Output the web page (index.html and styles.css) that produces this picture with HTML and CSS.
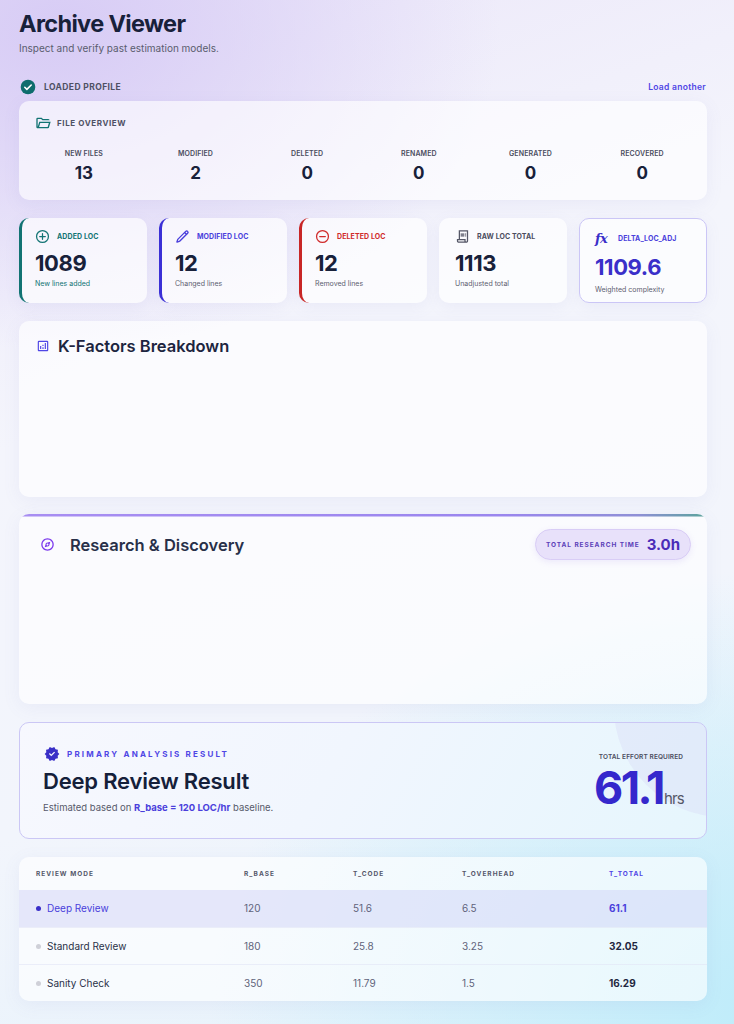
FILE: index.html
```html
<!DOCTYPE html>
<html lang="en">
<head>
<meta charset="utf-8">
<title>Archive Viewer</title>
<link rel="stylesheet" href="styles.css">
</head>
<body>
<div class="page">
  <header class="head">
    <h1 class="title">Archive Viewer</h1>
    <p class="subtitle">Inspect and verify past estimation models.</p>
  </header>

  <div class="profile-bar">
    <div class="profile-left">
      <svg class="ic16" viewBox="0 0 24 24"><circle cx="12" cy="12" r="11" fill="#0e6d6d"/><path d="M7.2 12.4l3.1 3.1L16.8 9" fill="none" stroke="#fff" stroke-width="2.4" stroke-linecap="round" stroke-linejoin="round"/></svg>
      <span class="profile-label">LOADED PROFILE</span>
    </div>
    <a class="load-link">Load another</a>
  </div>

  <section class="card overview">
    <div class="card-head">
      <svg class="ic16 teal" viewBox="0 -960 960 960"><path fill="currentColor" d="M160-160q-33 0-56.5-23.5T80-240v-480q0-33 23.5-56.5T160-800h240l80 80h320q33 0 56.5 23.5T880-640H447l-80-80H160v480l96-320h684L837-217q-8 26-29.5 41.5T760-160H160Zm84-80h516l72-240H316l-72 240Zm0 0 72-240-72 240Zm-84-400v-80 80Z"/></svg>
      <span class="card-head-label">FILE OVERVIEW</span>
    </div>
    <div class="stats">
      <div class="stat"><span class="stat-label">NEW FILES</span><span class="stat-value">13</span></div>
      <div class="stat"><span class="stat-label">MODIFIED</span><span class="stat-value">2</span></div>
      <div class="stat"><span class="stat-label">DELETED</span><span class="stat-value">0</span></div>
      <div class="stat"><span class="stat-label">RENAMED</span><span class="stat-value">0</span></div>
      <div class="stat"><span class="stat-label">GENERATED</span><span class="stat-value">0</span></div>
      <div class="stat"><span class="stat-label">RECOVERED</span><span class="stat-value">0</span></div>
    </div>
  </section>

  <section class="metrics">
    <div class="metric m-added">
      <div class="metric-head">
        <svg class="ic15" viewBox="0 0 24 24"><circle cx="12" cy="12" r="9.5" fill="none" stroke="currentColor" stroke-width="2"/><path d="M12 7.5v9M7.5 12h9" stroke="currentColor" stroke-width="2" stroke-linecap="round"/></svg>
        <span class="metric-label">ADDED LOC</span>
      </div>
      <div class="metric-value">1089</div>
      <div class="metric-sub">New lines added</div>
    </div>
    <div class="metric m-mod">
      <div class="metric-head">
        <svg class="ic15" viewBox="0 0 24 24"><path d="M20.2 6.8a1 1 0 0 0-3-3L4.8 16.2a2 2 0 0 0-.5.8l-1.2 3.9 3.9-1.2a2 2 0 0 0 .8-.5z" fill="none" stroke="currentColor" stroke-width="2.2" stroke-linejoin="round"/><path d="M15 5.2l3.8 3.8" stroke="currentColor" stroke-width="2.2"/></svg>
        <span class="metric-label">MODIFIED LOC</span>
      </div>
      <div class="metric-value">12</div>
      <div class="metric-sub">Changed lines</div>
    </div>
    <div class="metric m-del">
      <div class="metric-head">
        <svg class="ic15" viewBox="0 0 24 24"><circle cx="12" cy="12" r="9.5" fill="none" stroke="currentColor" stroke-width="2"/><path d="M7.5 12h9" stroke="currentColor" stroke-width="2" stroke-linecap="round"/></svg>
        <span class="metric-label">DELETED LOC</span>
      </div>
      <div class="metric-value">12</div>
      <div class="metric-sub">Removed lines</div>
    </div>
    <div class="metric m-raw">
      <div class="metric-head">
        <svg class="ic15" viewBox="0 -960 960 960"><path fill="currentColor" d="M240-80q-50 0-85-35t-35-85v-120h120v-560h600v680q0 50-35 85t-85 35H240Zm480-80q17 0 28.5-11.5T760-200v-600H320v480h360v120q0 17 11.5 28.5T720-160ZM360-600v-80h240v80H360Zm0 120v-80h240v80H360Zm320-120q-17 0-28.5-11.5T640-640q0-17 11.5-28.5T680-680q17 0 28.5 11.5T720-640q0 17-11.5 28.5T680-600Zm0 120q-17 0-28.5-11.5T640-520q0-17 11.5-28.5T680-560q17 0 28.5 11.5T720-520q0 17-11.5 28.5T680-480ZM240-160h360v-80H200v40q0 17 11.5 28.5T240-160Zm-40 0v-80 80Z"/></svg>
        <span class="metric-label">RAW LOC TOTAL</span>
      </div>
      <div class="metric-value">1113</div>
      <div class="metric-sub">Unadjusted total</div>
    </div>
    <div class="metric m-delta">
      <div class="metric-head">
        <span class="fx">fx</span>
        <span class="metric-label">DELTA_LOC_ADJ</span>
      </div>
      <div class="metric-value">1109.6</div>
      <div class="metric-sub">Weighted complexity</div>
    </div>
  </section>

  <section class="card kfactors">
    <div class="section-head">
      <svg class="ic13 indigo" viewBox="0 -960 960 960"><path fill="currentColor" d="M280-280h80v-200h-80v200Zm320 0h80v-400h-80v400Zm-160 0h80v-120h-80v120Zm0-200h80v-80h-80v80ZM200-120q-33 0-56.5-23.5T120-200v-560q0-33 23.5-56.5T200-840h560q33 0 56.5 23.5T840-760v560q0 33-23.5 56.5T760-120H200Zm0-80h560v-560H200v560Zm0-560v560-560Z"/></svg>
      <h2 class="section-title">K-Factors Breakdown</h2>
    </div>
  </section>

  <section class="card research">
    <div class="research-head">
      <div class="research-title-wrap">
        <svg class="ic15 purple" viewBox="0 -960 960 960"><path fill="currentColor" d="m300-300 280-80 80-280-280 80-80 280Zm180-120q-25 0-42.5-17.5T420-480q0-25 17.5-42.5T480-540q25 0 42.5 17.5T540-480q0 25-17.5 42.5T480-420Zm0 340q-83 0-156-31.5T197-197q-54-54-85.5-127T80-480q0-83 31.5-156T197-763q54-54 127-85.5T480-880q83 0 156 31.5T763-763q54 54 85.5 127T880-480q0 83-31.5 156T763-197q-54 54-127 85.5T480-80Zm0-80q133 0 226.5-93.5T800-480q0-133-93.5-226.5T480-800q-133 0-226.5 93.5T160-480q0 133 93.5 226.5T480-160Zm0-320Z"/></svg>
        <h2 class="section-title research-title">Research &amp; Discovery</h2>
      </div>
      <div class="pill">
        <span class="pill-label">TOTAL RESEARCH TIME</span>
        <span class="pill-value">3.0h</span>
      </div>
    </div>
  </section>

  <section class="result">
    <div class="result-left">
      <div class="result-tag">
        <svg class="ic16 indigo2" viewBox="0 -960 960 960"><path fill="currentColor" d="m344-60-76-128-144-32 14-148-98-112 98-112-14-148 144-32 76-128 136 58 136-58 76 128 144 32-14 148 98 112-98 112 14 148-144 32-76 128-136-58-136 58Zm94-278 226-226-56-58-170 170-86-84-56 56 142 142Z"/></svg>
        <span class="result-tag-label">PRIMARY ANALYSIS RESULT</span>
      </div>
      <h2 class="result-title">Deep Review Result</h2>
      <p class="result-desc">Estimated based on <strong>R_base = 120 LOC/hr</strong> baseline.</p>
    </div>
    <div class="result-right">
      <span class="effort-label">TOTAL EFFORT REQUIRED</span>
      <div class="effort"><span class="effort-num">61.1</span><span class="effort-unit">hrs</span></div>
    </div>
  </section>

  <section class="card table-card">
    <table class="modes">
      <colgroup>
        <col class="c1"><col class="c2"><col class="c3"><col class="c4"><col class="c5">
      </colgroup>
      <thead>
        <tr><th>REVIEW MODE</th><th>R_BASE</th><th>T_CODE</th><th>T_OVERHEAD</th><th class="th-total">T_TOTAL</th></tr>
      </thead>
      <tbody>
        <tr class="active"><td><span class="dot"></span>Deep Review</td><td>120</td><td>51.6</td><td>6.5</td><td class="total">61.1</td></tr>
        <tr><td><span class="dot"></span>Standard Review</td><td>180</td><td>25.8</td><td>3.25</td><td class="total">32.05</td></tr>
        <tr><td><span class="dot"></span>Sanity Check</td><td>350</td><td>11.79</td><td>1.5</td><td class="total">16.29</td></tr>
      </tbody>
    </table>
  </section>
</div>
</body>
</html>
```

FILE: styles.css
```css
* { box-sizing: border-box; }
html, body { margin: 0; padding: 0; }
body {
  font-family: Inter, "Noto Sans", "Liberation Sans", sans-serif;
  color: #1b2339;
  min-height: 1024px;
  background:
    radial-gradient(ellipse 440px 320px at 60px 30px, rgba(214,202,245,0.95), rgba(214,202,245,0) 100%),
    radial-gradient(ellipse 560px 440px at 770px 1010px, rgba(190,236,250,1), rgba(190,236,250,0) 100%),
    linear-gradient(160deg, #ebe6f9 0%, #f4f5fc 35%, #f2f5fc 65%, #e4f2fb 100%);
}
.page {
  width: 734px;
  padding: 9px 27px 24px 19px;
  display: flex;
  flex-direction: column;
}
.head { margin: 0; }
.title {
  margin: 0;
  font-size: 23.5px;
  line-height: 29px;
  font-weight: 700;
  color: #18213a;
  letter-spacing: -0.65px;
}
.subtitle {
  margin: 3px 0 0;
  font-size: 10px;
  line-height: 14px;
  color: #5a5d6e;
}
.ic16 { width: 16px; height: 16px; display: block; flex: none; }
.ic15 { width: 15px; height: 15px; display: block; flex: none; }
.ic13 { width: 14px; height: 14px; display: block; flex: none; }
.teal { color: #127373; }
.indigo { color: #4f46e5; }
.indigo2 { color: #3a2fc7; }
.purple { color: #7c3aed; }

.profile-bar {
  margin-top: 24px;
  display: flex;
  align-items: center;
  justify-content: space-between;
  height: 16px;
}
.profile-left { display: flex; align-items: center; gap: 8px; padding-left: 1px; }
.profile-label {
  font-size: 8.5px;
  font-weight: 700;
  letter-spacing: 0.4px;
  color: #4e5064;
}
.load-link {
  font-size: 8.5px;
  font-weight: 600;
  color: #4f46e5;
  letter-spacing: 0.3px;
  margin-right: 1px;
}

.card {
  background: rgba(255,255,255,0.62);
  border-radius: 10px;
  box-shadow: 0 4px 18px rgba(120,120,190,0.08);
}
.overview {
  margin-top: 6px;
  height: 99px;
  padding: 14px 9px 0 16px;
}
.card-head { display: flex; align-items: center; gap: 6px; height: 16px; }
.card-head-label {
  font-size: 8px;
  font-weight: 700;
  letter-spacing: 0.6px;
  color: #4e5064;
}
.stats {
  margin: 18px 0 0 -7px;
  display: grid;
  grid-template-columns: repeat(6, 1fr);
}
.stat { display: flex; flex-direction: column; align-items: center; }
.stat-label {
  font-size: 7px;
  font-weight: 600;
  color: #4b4d5e;
  line-height: 10px;
  letter-spacing: 0.1px;
}
.stat-value {
  margin-top: 4px;
  font-size: 17px;
  font-weight: 700;
  line-height: 21px;
  color: #18213a;
}

.metrics {
  margin-top: 18px;
  display: grid;
  grid-template-columns: repeat(5, 1fr);
  gap: 12px;
}
.metric {
  height: 85px;
  border-radius: 10px;
  background: rgba(255,255,255,0.66);
  box-shadow: 0 4px 16px rgba(120,120,190,0.08);
  padding: 11px 10px 0 16px;
}
.metric-head { display: flex; align-items: center; gap: 7px; height: 15px; }
.metric-label {
  font-size: 7px;
  font-weight: 700;
  letter-spacing: 0.1px;
}
.metric-value {
  margin-top: 6px;
  font-size: 22px;
  line-height: 26px;
  font-weight: 700;
  color: #18213a;
  letter-spacing: -0.4px;
}
.metric-sub {
  margin-top: 3px;
  font-size: 7px;
  line-height: 10px;
  color: #5d6070;
}
.m-added { border-left: 3px solid #127373; padding-left: 13px; }
.m-added .metric-head, .m-added .metric-label, .m-added .metric-sub { color: #137474; }
.m-mod { border-left: 3px solid #3b30d6; padding-left: 13px; }
.m-mod .metric-head, .m-mod .metric-label { color: #4a3fdc; }
.m-del { border-left: 3px solid #c82626; padding-left: 13px; }
.m-del .metric-head, .m-del .metric-label { color: #d02a2a; }
.m-raw .metric-head { color: #555767; }
.m-raw .metric-label { color: #4b4d5e; }
.m-delta {
  border: 1.5px solid #cbc6f6;
  padding: 12px 10px 0 15px;
}
.m-delta .metric-label { color: #4a3fdc; }
.m-delta .metric-value { color: #3a2fc9; margin-top: 8px; }
.m-delta .metric-sub { margin-top: 5px; }
.fx {
  font-family: "DejaVu Serif", "Liberation Serif", serif;
  font-style: italic;
  font-weight: 700;
  font-size: 13px;
  line-height: 15px;
  color: #3a2fc9;
  width: 16px;
  letter-spacing: -0.5px;
}

.kfactors {
  margin-top: 18px;
  height: 176px;
  padding: 15px 16px 0 17px;
}
.section-head { display: flex; align-items: center; gap: 8px; height: 20px; }
.section-title {
  margin: 0;
  font-size: 16.5px;
  line-height: 20px;
  font-weight: 600;
  color: #1d2540;
}

.research {
  margin-top: 17px;
  height: 190px;
  padding: 15px 16px 0 21px;
  background:
    linear-gradient(90deg, #a88ef2 0%, #9a86ee 70%, #8f90d6 90%, #5aa49b 100%) top / 100% 2.5px no-repeat,
    rgba(255,255,255,0.62);
}
.research-head { display: flex; align-items: center; justify-content: space-between; }
.research-title-wrap { display: flex; align-items: center; gap: 15px; }
.research-title { color: #283049; }
.pill {
  height: 31px;
  width: 156px;
  border-radius: 16px;
  background: #e8e1fa;
  border: 1px solid #d9cdf6;
  box-shadow: 0 2px 6px rgba(130,100,220,0.12);
  display: flex;
  align-items: center;
  justify-content: center;
  gap: 7px;
}
.pill-label {
  font-size: 6.5px;
  font-weight: 700;
  letter-spacing: 0.95px;
  color: #5b40b8;
}
.pill-value {
  font-size: 15px;
  font-weight: 700;
  color: #4a2cb8;
}

.result {
  position: relative;
  overflow: hidden;
  margin-top: 18px;
  height: 117px;
  border-radius: 10px;
  border: 1.5px solid #cbc7f5;
  background: linear-gradient(120deg, #f7f8fe 0%, #f1f6fe 45%, #e6f6fd 100%);
  display: flex;
  justify-content: space-between;
  align-items: flex-start;
  padding: 23px 22px 0 23px;
}
.result::before {
  content: "";
  position: absolute;
  width: 220px;
  height: 220px;
  border-radius: 50%;
  right: -128px;
  top: -126px;
  background: rgba(210,212,246,0.32);
}
.result-left { position: relative; }
.result-tag { display: flex; align-items: center; gap: 7px; padding-left: 1px; }
.result-tag-label {
  font-size: 8px;
  font-weight: 700;
  letter-spacing: 2.2px;
  color: #4f46e5;
}
.result-title {
  margin: 5px 0 0;
  font-size: 22px;
  line-height: 28px;
  font-weight: 600;
  color: #15203a;
  letter-spacing: -0.2px;
}
.result-desc {
  margin: 6px 0 0;
  font-size: 9.5px;
  line-height: 13px;
  color: #575a6b;
}
.result-desc strong { color: #4a3fdc; font-weight: 700; }
.result-right {
  position: relative;
  display: flex;
  flex-direction: column;
  align-items: flex-end;
  padding-top: 7px;
}
.effort-label {
  font-size: 6.5px;
  line-height: 8px;
  font-weight: 600;
  color: #4b4d5e;
  letter-spacing: 0.1px;
  margin-right: 1px;
}
.effort { display: flex; align-items: baseline; margin-top: 0; }
.effort-num {
  font-size: 45px;
  line-height: 54px;
  font-weight: 700;
  color: #3528cc;
  letter-spacing: -2.5px;
}
.effort-unit {
  font-size: 15px;
  line-height: 18px;
  color: #555767;
  letter-spacing: -0.8px;
  margin-left: 1px;
}

.table-card {
  margin-top: 18px;
  overflow: hidden;
}
.modes {
  width: 100%;
  border-collapse: collapse;
  table-layout: fixed;
}
.c1 { width: 208px; }
.c2 { width: 109px; }
.c3 { width: 109px; }
.c4 { width: 147px; }
.modes th {
  height: 33px;
  padding: 0 0 0 17px;
  text-align: left;
  font-size: 6.5px;
  font-weight: 700;
  letter-spacing: 1px;
  color: #55576a;
}
.modes th.th-total { color: #4f46e5; }
.modes td {
  height: 37px;
  padding: 0 0 0 17px;
  font-size: 10px;
  color: #60637a;
  border-top: 1px solid rgba(225,228,245,0.6);
}
.modes td:first-child { color: #2a3148; }
.modes td.total { font-weight: 700; color: #1f2740; }
.modes tr.active td {
  background: rgba(196,200,245,0.38);
  border-top: none;
}
.modes tr.active td:first-child { color: #4a3fdc; }
.modes tr.active td.total { color: #4a3fdc; }
.dot {
  display: inline-block;
  width: 5px;
  height: 5px;
  border-radius: 50%;
  background: #cfd0d8;
  margin-right: 6px;
  vertical-align: 1px;
}
.modes tr.active .dot { background: #3a2fc9; }
```
